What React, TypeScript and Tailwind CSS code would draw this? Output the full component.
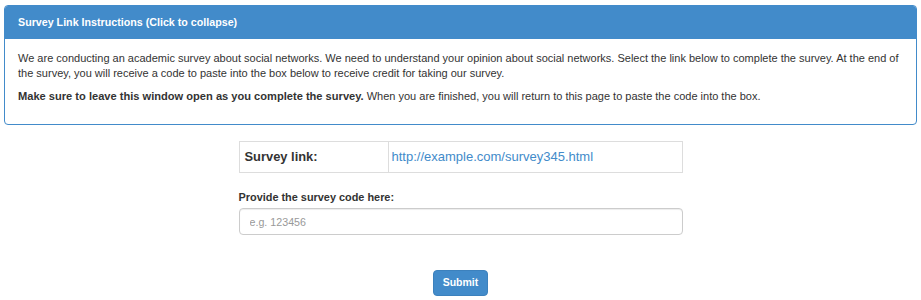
export default function App() {
  return (
    <div className="w-[921px] h-[300px] bg-white text-[#333] font-['Liberation_Sans',Arial,sans-serif] pt-[5px] px-[4px] box-border">
      <div className="border border-[#428bca] rounded-[4px] overflow-hidden">
        <div className="bg-[#428bca] text-white text-[10.7px] font-bold h-[33px] flex items-center px-[13px] cursor-pointer">
          Survey Link Instructions (Click to collapse)
        </div>
        <div className="px-[13px] pt-[12px] pb-[12px] text-[11px] leading-[15px]">
          <p className="mb-[8px]">
            We are conducting an academic survey about social networks. We need to understand your opinion about social networks. Select the link below to complete the survey. At the end of the survey, you will receive a code to paste into the box below to receive credit for taking our survey.
          </p>
          <p className="mb-[8px]">
            <b className="text-[11.1px]">Make sure to leave this window open as you complete the survey.</b> When you are finished, you will return to this page to paste the code into the box.
          </p>
        </div>
      </div>
      <div className="w-[444px] mx-auto mt-[16px]">
        <table className="w-full border-collapse border border-[#ddd]">
          <tbody>
            <tr className="h-[31px]">
              <td className="w-[149px] border border-[#ddd] px-[5px] text-[12.9px] font-bold">Survey link:</td>
              <td className="border border-[#ddd] px-[3px] text-[13px]">
                <a href="#" className="text-[#428bca]">http://example.com/survey345.html</a>
              </td>
            </tr>
          </tbody>
        </table>
        <label className="block text-[10.9px] font-bold mt-[17px] mb-[3px] leading-[15px]">Provide the survey code here:</label>
        <input
          type="text"
          placeholder="e.g. 123456"
          className="block w-full h-[27px] border border-[#ccc] rounded-[4px] px-[10px] text-[10.7px] placeholder:text-[#999] shadow-[inset_0_1px_1px_rgba(0,0,0,0.075)] outline-none"
        />
        <div className="flex justify-center mt-[35px]">
          <button className="w-[55px] h-[26px] bg-[#428bca] border border-[#3c81bd] rounded-[4px] text-white text-[10.5px] font-bold">Submit</button>
        </div>
      </div>
    </div>
  );
}
